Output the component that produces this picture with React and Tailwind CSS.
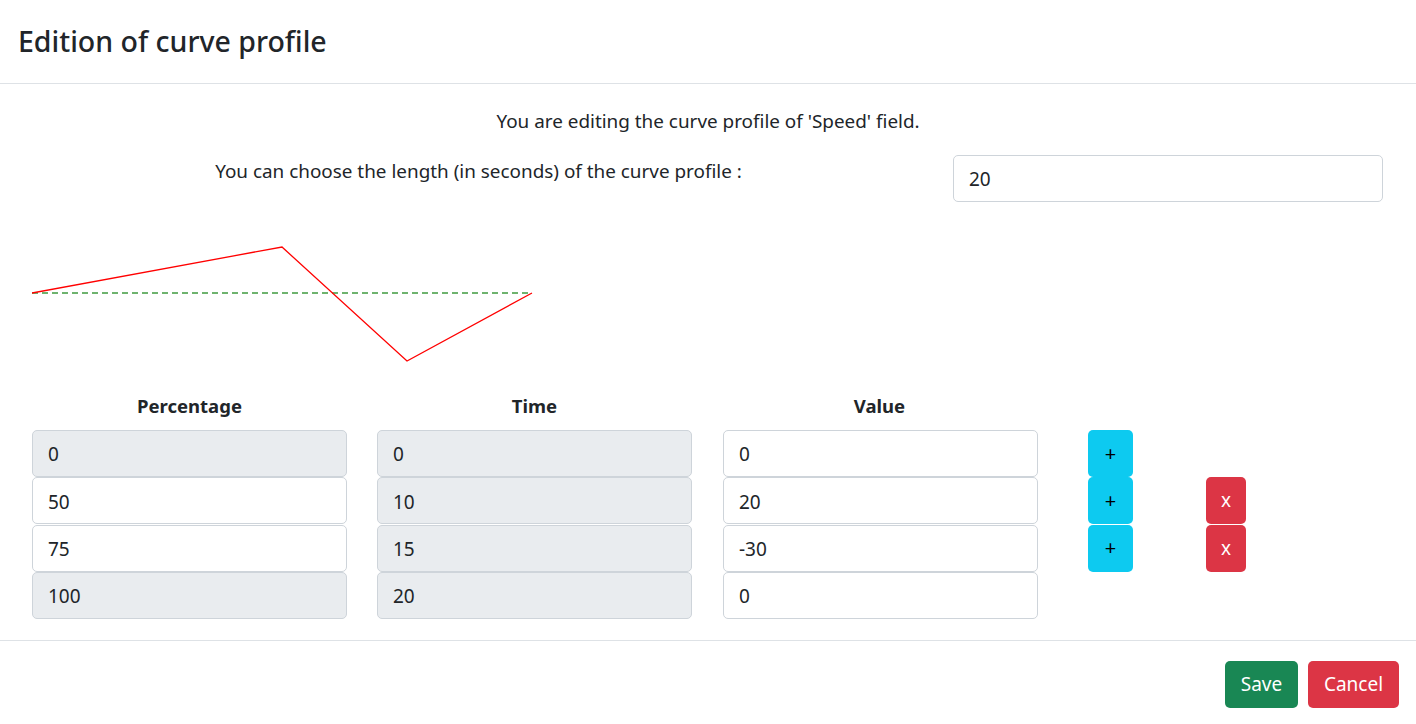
const rows = [
  { pct: '0', time: '0', value: '0', pctLocked: true, add: true, remove: false },
  { pct: '50', time: '10', value: '20', pctLocked: false, add: true, remove: true },
  { pct: '75', time: '15', value: '-30', pctLocked: false, add: true, remove: true },
  { pct: '100', time: '20', value: '0', pctLocked: true, add: false, remove: false },
];

function Field({ value, locked }) {
  return (
    <div
      className={`w-[315px] h-[47px] flex items-center px-[15px] pt-[2px] border border-[#ced4da] rounded-[5px] text-[19px] text-[#212529] ${
        locked ? 'bg-[#e9ecef]' : 'bg-white'
      }`}
    >
      {value}
    </div>
  );
}

function CurveChart() {
  // x = percentage * 5, y = 63 - value * 2.28
  return (
    <svg width="510" height="140" viewBox="0 0 510 140" className="block">
      <line x1="0" y1="63" x2="500" y2="63" stroke="#3f9b3f" strokeWidth="1.4" strokeDasharray="6 4" />
      <polyline points="0,63 250,17 375,131 500,63" fill="none" stroke="#ff0000" strokeWidth="1.3" />
    </svg>
  );
}

export default function App() {
  return (
    <div
      className="w-[1416px] h-[724px] bg-white text-[#212529] overflow-hidden"
      style={{ fontFamily: '"Noto Sans", "Open Sans", sans-serif' }}
    >
      <div className="h-[84px] border-b border-[#dee2e6] flex items-center px-[18px]">
        <h5 className="text-[28.5px] font-medium leading-none">Edition of curve profile</h5>
      </div>

      <div className="px-[32px]">
        <div className="mt-[24px] h-[26px] leading-[26px] text-center text-[18.9px]">
          You are editing the curve profile of 'Speed' field.
        </div>

        <div className="mt-[21px] flex">
          <div className="w-[893px] text-center text-[18.9px] leading-[32px]">
            You can choose the length (in seconds) of the curve profile :
          </div>
          <div className="ml-[28px] w-[430px] h-[47px] flex items-center px-[15px] pt-[2px] border border-[#ced4da] rounded-[5px] text-[19px]">
            20
          </div>
        </div>

        <div className="mt-[28px]">
          <CurveChart />
        </div>

        <div className="mt-[23px] flex gap-[30px] h-[26px] leading-[26px] text-[18.5px] font-bold">
          <div className="w-[315px] text-center">Percentage</div>
          <div className="w-[315px] text-center">Time</div>
          <div className="w-[315px] text-center">Value</div>
        </div>

        <div className="mt-[11px] flex flex-col">
          {rows.map((row) => (
            <div key={row.pct} className="flex items-center h-[47.3px]">
              <Field value={row.pct} locked={row.pctLocked} />
              <div className="ml-[30px]">
                <Field value={row.time} locked />
              </div>
              <div className="ml-[31px]">
                <Field value={row.value} />
              </div>
              <div className="ml-[50px] w-[45px]">
                {row.add && (
                  <button className="w-[45px] h-[47px] rounded-[5px] bg-[#0dcaf0] text-black text-[20px] leading-none">+</button>
                )}
              </div>
              <div className="ml-[73px] w-[40px]">
                {row.remove && (
                  <button className="w-[40px] h-[47px] rounded-[5px] bg-[#dc3545] text-white text-[19px] leading-none">x</button>
                )}
              </div>
            </div>
          ))}
        </div>
      </div>

      <div className="mt-[21px] border-t border-[#dee2e6] flex justify-end gap-[10px] pt-[20px] pr-[17px]">
        <button className="w-[73px] h-[47px] rounded-[5px] bg-[#198754] text-white text-[19px]">Save</button>
        <button className="w-[91px] h-[47px] rounded-[5px] bg-[#dc3545] text-white text-[19px]">Cancel</button>
      </div>
    </div>
  );
}
